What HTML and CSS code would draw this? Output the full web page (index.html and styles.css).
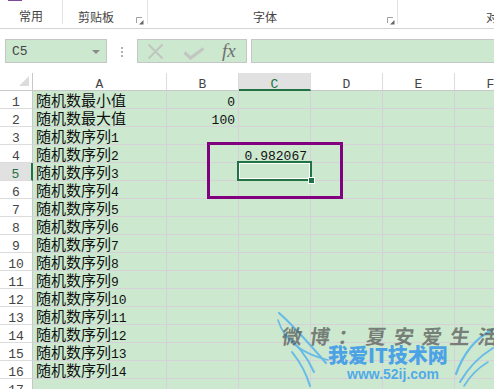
FILE: index.html
```html
<!DOCTYPE html>
<html>
<head>
<meta charset="utf-8">
<link rel="stylesheet" href="styles.css">
</head>
<body>
<div class="app">
  <div class="ribbon">
    <div class="grp g1"><span class="accent"></span><span class="glabel">常用</span></div>
    <div class="grp g2"><span class="glabel">剪贴板</span><svg class="launcher" width="8" height="8" viewBox="0 0 8 8"><path d="M0.5 6V0.5H6" fill="none" stroke="#a0a0a0"/><path d="M3 7.5H7.5V3Z" fill="#666"/></svg></div>
    <div class="grp g3"><span class="glabel">字体</span><svg class="launcher" width="8" height="8" viewBox="0 0 8 8"><path d="M0.5 6V0.5H6" fill="none" stroke="#a0a0a0"/><path d="M3 7.5H7.5V3Z" fill="#666"/></svg></div>
    <div class="grp g4"><span class="glabel">对</span></div>
  </div>

  <div class="fbar">
    <div class="namebox"><span class="m nb">C5</span><span class="caret"></span></div>
    <div class="dots"><i></i><i></i><i></i></div>
    <div class="fxbox">
      <svg class="ix" width="17" height="17" viewBox="0 0 17 17"><path d="M1.5 1.5L15.5 15.5M15.5 1.5L1.5 15.5" stroke="#c2c6c2" stroke-width="2" fill="none"/></svg>
      <svg class="ick" width="22" height="13" viewBox="0 0 22 13"><path d="M1.5 5.5L7.5 11L20.5 1.5" stroke="#c2c6c2" stroke-width="3.2" fill="none"/></svg>
      <span class="fx">fx</span>
    </div>
    <div class="finput"></div>
  </div>

  <div class="sheet">
    <div class="corner"><span class="tri"></span></div>
    <div class="ch"><span class="m">A</span></div>
    <div class="ch"><span class="m">B</span></div>
    <div class="ch sel"><span class="m">C</span></div>
    <div class="ch"><span class="m">D</span></div>
    <div class="ch"><span class="m">E</span></div>
    <div class="ch"><span class="m">F</span></div>

    <div class="rh"><span class="m">1</span></div><div class="c">随机数最小值</div><div class="c r"><span class="m">0</span></div><div class="c"></div><div class="c"></div><div class="c"></div><div class="c"></div>
    <div class="rh"><span class="m">2</span></div><div class="c">随机数最大值</div><div class="c r"><span class="m">100</span></div><div class="c"></div><div class="c"></div><div class="c"></div><div class="c"></div>
    <div class="rh"><span class="m">3</span></div><div class="c">随机数序列<span class="m">1</span></div><div class="c"></div><div class="c"></div><div class="c"></div><div class="c"></div><div class="c"></div>
    <div class="rh"><span class="m">4</span></div><div class="c">随机数序列<span class="m">2</span></div><div class="c"></div><div class="c r"><span class="m">0.982067</span></div><div class="c"></div><div class="c"></div><div class="c"></div>
    <div class="rh sel"><span class="m">5</span></div><div class="c">随机数序列<span class="m">3</span></div><div class="c"></div><div class="c"></div><div class="c"></div><div class="c"></div><div class="c"></div>
    <div class="rh"><span class="m">6</span></div><div class="c">随机数序列<span class="m">4</span></div><div class="c"></div><div class="c"></div><div class="c"></div><div class="c"></div><div class="c"></div>
    <div class="rh"><span class="m">7</span></div><div class="c">随机数序列<span class="m">5</span></div><div class="c"></div><div class="c"></div><div class="c"></div><div class="c"></div><div class="c"></div>
    <div class="rh"><span class="m">8</span></div><div class="c">随机数序列<span class="m">6</span></div><div class="c"></div><div class="c"></div><div class="c"></div><div class="c"></div><div class="c"></div>
    <div class="rh"><span class="m">9</span></div><div class="c">随机数序列<span class="m">7</span></div><div class="c"></div><div class="c"></div><div class="c"></div><div class="c"></div><div class="c"></div>
    <div class="rh"><span class="m">10</span></div><div class="c">随机数序列<span class="m">8</span></div><div class="c"></div><div class="c"></div><div class="c"></div><div class="c"></div><div class="c"></div>
    <div class="rh"><span class="m">11</span></div><div class="c">随机数序列<span class="m">9</span></div><div class="c"></div><div class="c"></div><div class="c"></div><div class="c"></div><div class="c"></div>
    <div class="rh"><span class="m">12</span></div><div class="c">随机数序列<span class="m">10</span></div><div class="c"></div><div class="c"></div><div class="c"></div><div class="c"></div><div class="c"></div>
    <div class="rh"><span class="m">13</span></div><div class="c">随机数序列<span class="m">11</span></div><div class="c"></div><div class="c"></div><div class="c"></div><div class="c"></div><div class="c"></div>
    <div class="rh"><span class="m">14</span></div><div class="c">随机数序列<span class="m">12</span></div><div class="c"></div><div class="c"></div><div class="c"></div><div class="c"></div><div class="c"></div>
    <div class="rh"><span class="m">15</span></div><div class="c">随机数序列<span class="m">13</span></div><div class="c"></div><div class="c"></div><div class="c"></div><div class="c"></div><div class="c"></div>
    <div class="rh"><span class="m">16</span></div><div class="c">随机数序列<span class="m">14</span></div><div class="c"></div><div class="c"></div><div class="c"></div><div class="c"></div><div class="c"></div>
    <div class="rh"><span class="m">17</span></div><div class="c"></div><div class="c"></div><div class="c"></div><div class="c"></div><div class="c"></div><div class="c"></div>

    <div class="annot"></div>
    <div class="selbox"><span class="handle"></span></div>
  </div>

  <div class="wm">
    <svg class="wings" width="218" height="79" viewBox="0 0 218 79">
      <g fill="none" stroke="#4fb0ee" stroke-linecap="round" opacity="0.8">
        <path d="M3 3C16 14 30 30 50 53" stroke-width="2.2"/>
        <path d="M2 10C8 30 26 44 52 50" stroke-width="1.6"/>
        <path d="M8 24C20 33 30 44 38 62" stroke-width="2"/>
        <path d="M16 42C24 52 30 62 34 76" stroke-width="2"/>
        <path d="M216 20C200 28 188 42 180 64" stroke-width="2.2"/>
        <path d="M217 38C204 46 192 58 184 72" stroke-width="2"/>
        <path d="M212 52C202 58 194 66 188 76" stroke-width="1.6"/>
      </g>
    </svg>
    <div class="wm1">微博：夏安爱生活</div>
    <div class="wm2">我爱IT技术网</div>
    <div class="wm3">www.52ij.com</div>
  </div>
</div>
</body>
</html>
```

FILE: styles.css
```css
* { box-sizing: border-box; }
html, body { margin: 0; padding: 0; }
body {
  width: 494px;
  height: 389px;
  overflow: hidden;
  background: #ffffff;
  font-family: "Noto Sans CJK SC", sans-serif;
  color: #222;
}
.app {
  position: relative;
  width: 494px;
  height: 389px;
  overflow: hidden;
}

/* ribbon */
.ribbon {
  display: flex;
  height: 29px;
  border-bottom: 1px solid #d4d4d4;
}
.grp {
  height: 24px;
  border-right: 1px solid #e3e3e3;
  display: flex;
  align-items: flex-start;
  flex: 0 0 auto;
}
.glabel {
  font-size: 12px;
  line-height: 16px;
  color: #444;
  margin-top: 9px;
  white-space: nowrap;
}
.g1 {
  width: 63px;
  flex-direction: column;
}
.accent {
  display: block;
  width: 14px;
  height: 2px;
  margin-left: 8px;
  background: #7e4a9c;
}
.g1 .glabel { margin-top: 7px; padding-left: 19px; }
.g2 { width: 85px; padding-left: 15px; }
.g3 { width: 250px; padding-left: 105px; }
.g4 { width: 97px; padding-left: 88px; border-right: 0; }
.launcher { margin-top: 17px; }
.g2 .launcher { margin-left: 22px; }
.g3 .launcher { margin-left: 110px; }

/* formula bar */
.fbar {
  display: flex;
  height: 24px;
  margin-top: 10px;
}
.namebox {
  flex: 0 0 102px;
  margin-left: 5px;
  border: 1px solid #c6c6c6;
  background: #cce8cf;
  display: flex;
  align-items: center;
  justify-content: space-between;
  padding: 0 6px 0 6px;
}
.nb { color: #444; }
.caret {
  width: 0;
  height: 0;
  border-left: 4px solid transparent;
  border-right: 4px solid transparent;
  border-top: 4px solid #8a8a8a;
  margin-top: 1px;
}
.dots {
  flex: 0 0 30px;
  display: flex;
  flex-direction: column;
  align-items: center;
  justify-content: center;
  gap: 2px;
  padding-top: 1px;
}
.dots i {
  display: block;
  width: 2px;
  height: 2px;
  background: #b0b0b0;
}
.fxbox {
  flex: 0 0 110px;
  border: 1px solid #c6c6c6;
  background: #cce8cf;
  display: flex;
  align-items: center;
  padding-left: 9px;
}
.ick { margin-left: 19px; margin-top: 4px; }
.fx {
  margin-left: 17px;
  font-family: "Liberation Serif", serif;
  font-style: italic;
  font-size: 19px;
  line-height: 20px;
  color: #707070;
}
.finput {
  flex: 1 0 auto;
  margin-left: 4px;
  margin-right: -20px;
  border: 1px solid #c6c6c6;
  background: #cce8cf;
}

/* sheet */
.sheet {
  position: relative;
  margin-top: 10px;
  display: grid;
  grid-template-columns: 33px 134px 72px 72px 72px 72px 72px;
  grid-auto-rows: 18px;
  font-size: 15px;
  line-height: 17px;
}
.m {
  font-family: "Liberation Mono", monospace;
  font-size: 13px;
  line-height: 1;
}
.corner {
  background: #fff;
  border-right: 1px solid #c8c8c8;
  border-bottom: 1px solid #c8c8c8;
  display: flex;
  justify-content: flex-end;
  align-items: flex-end;
  padding: 0 3px 4px 0;
}
.tri {
  width: 0;
  height: 0;
  border-left: 10px solid transparent;
  border-bottom: 10px solid #dcdcdc;
}
.ch {
  background: #fff;
  border-right: 1px solid #dcdcdc;
  border-bottom: 1px solid #c8c8c8;
  text-align: center;
  color: #444;
  white-space: nowrap;
}
.ch.sel {
  background: #e1e1e1;
  color: #217346;
  border-bottom: 2px solid #217346;
}
.rh {
  background: #fff;
  border-right: 1px solid #c8c8c8;
  border-bottom: 1px solid #dcdcdc;
  text-align: center;
  color: #444;
  white-space: nowrap;
}
.rh.sel {
  background: #e1e1e1;
  color: #217346;
  border-right: 2px solid #217346;
}
.c {
  background: #cce8cf;
  border-right: 1px solid #d6d0d8;
  border-bottom: 1px solid #d6d0d8;
  padding: 0 3px;
  color: #111;
  white-space: nowrap;
}
.c.r { text-align: right; }

.annot {
  position: absolute;
  left: 207px;
  top: 69px;
  width: 136px;
  height: 57px;
  border: 3px solid #800080;
  pointer-events: none;
}
.selbox {
  position: absolute;
  left: 237px;
  top: 88px;
  width: 75px;
  height: 20px;
  border: 2px solid #217346;
  box-shadow: inset 0 0 0 1px #ffffff;
}
.handle {
  position: absolute;
  right: -5px;
  bottom: -5px;
  width: 7px;
  height: 7px;
  background: #217346;
  border: 1px solid #ffffff;
}

/* watermark */
.wm {
  position: absolute;
  left: 276px;
  top: 310px;
  width: 218px;
  height: 79px;
  pointer-events: none;
}
.wings { position: absolute; left: 0; top: 0; }
.wm1 {
  position: absolute;
  left: 6px;
  top: 13px;
  font-size: 20px;
  line-height: 26px;
  font-weight: 700;
  letter-spacing: 8px;
  color: rgba(80, 80, 80, 0.7);
  white-space: nowrap;
  transform: skewX(-8deg);
}
.wm2 {
  position: absolute;
  left: 52px;
  top: 32px;
  font-size: 20px;
  line-height: 26px;
  font-weight: 900;
  color: rgba(52, 150, 232, 0.85);
  white-space: nowrap;
}
.wm3 {
  position: absolute;
  left: 71px;
  top: 56px;
  font-family: "Liberation Sans", sans-serif;
  font-size: 14px;
  line-height: 16px;
  font-weight: 700;
  color: rgba(58, 160, 234, 0.85);
  white-space: nowrap;
}
```
